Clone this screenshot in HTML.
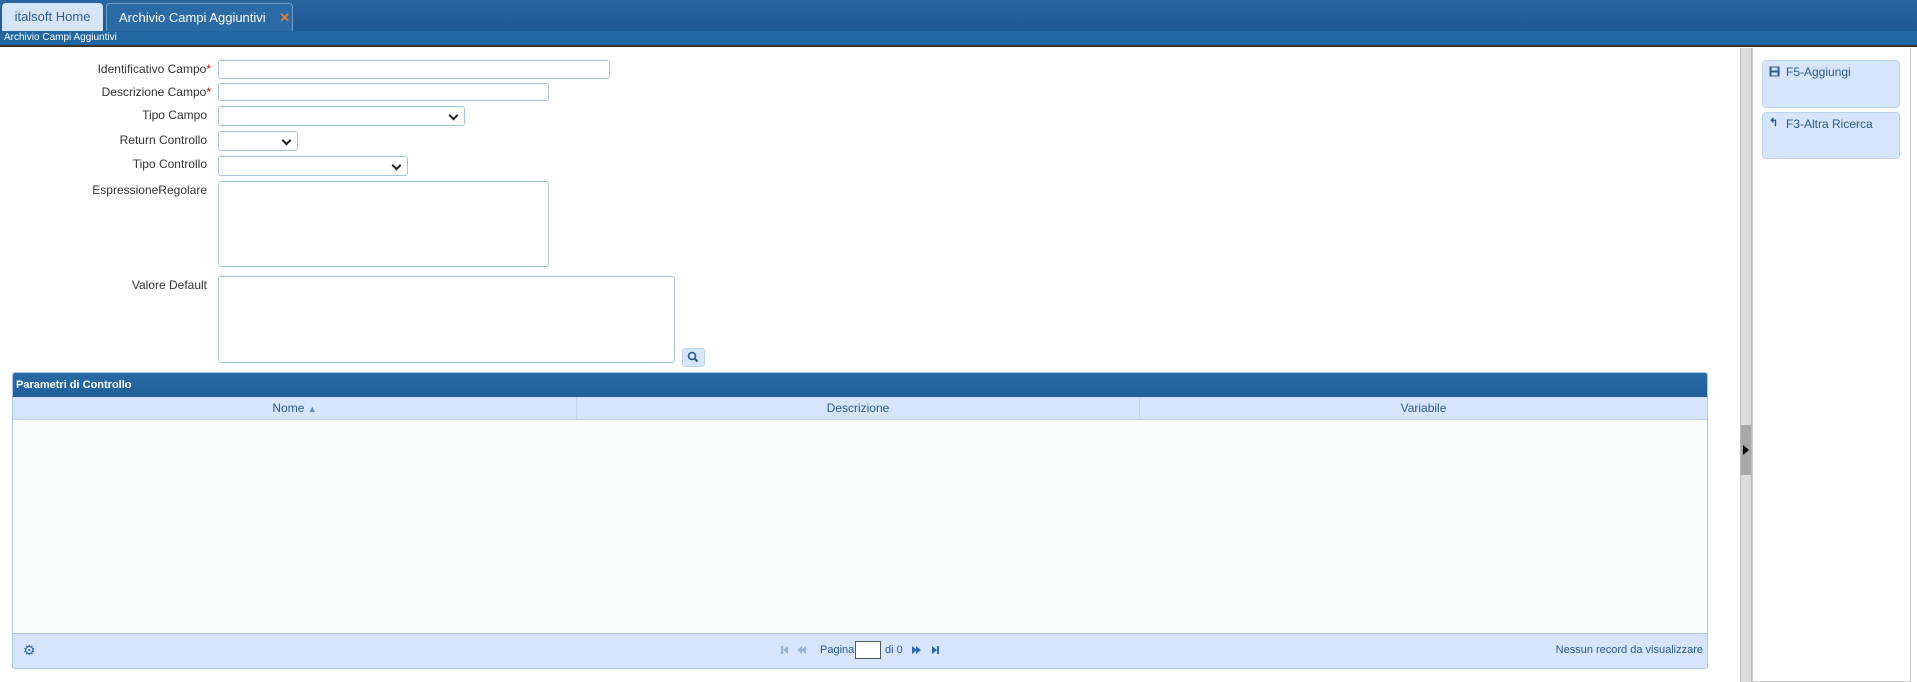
<!DOCTYPE html>
<html><head><meta charset="utf-8">
<style>
*{box-sizing:border-box;margin:0;padding:0}
body{width:1917px;height:682px;overflow:hidden;background:#fff;font-family:"Liberation Sans",sans-serif;font-size:12px;color:#333;position:relative}
.abs{position:absolute}
#top{left:0;top:0;width:1917px;height:31px;background:linear-gradient(#2a66a0,#1d5a94);}
#sub{left:0;top:31px;width:1917px;height:16px;background:#2066a0;border-bottom:2px solid #333;color:#fff;font-size:10px;line-height:14px;padding-left:4px}
.tab{top:3px;height:28px;border-radius:4px 4px 0 0;line-height:27px;font-size:13px}
.lbl{right:1706px;text-align:right;font-size:12px;white-space:nowrap}
.lbl b{color:#d00;font-weight:normal}
.in{left:218px;border:1px solid #a6c4e0;border-radius:3px;background:#fff}
.sel::after{content:"";position:absolute;right:7px;top:5px;width:5px;height:5px;border-right:2px solid #222;border-bottom:2px solid #222;transform:rotate(45deg)}
.btn{left:1762px;width:138px;background:#d6e5fb;border:1px solid #bcd3f0;border-radius:4px;color:#2a5b8a;font-size:12px;padding:4px 0 0 23px}
.pg{position:absolute;top:12px;width:0;height:0;border-top:4px solid transparent;border-bottom:4px solid transparent}
</style></head><body>
<div id="top" class="abs"></div>
<div class="abs tab" style="left:2px;width:101px;background:#d6e4f7;color:#2a5f95;text-align:center">italsoft Home</div>
<div class="abs tab" style="left:106px;width:187px;background:#2a6aa5;border:1px solid #6f9cc8;border-bottom:none;color:#fff;padding-left:12px">Archivio Campi Aggiuntivi <span style="color:#f07d1f;font-weight:bold;margin-left:10px">✕</span></div>
<div id="sub" class="abs">Archivio Campi Aggiuntivi</div>

<div class="abs lbl" style="top:62px">Identificativo Campo<b>*</b></div>
<div class="abs in" style="top:60px;width:392px;height:19px"></div>
<div class="abs lbl" style="top:85px">Descrizione Campo<b>*</b></div>
<div class="abs in" style="top:83px;width:331px;height:18px"></div>
<div class="abs lbl" style="top:108px;right:1710px">Tipo Campo</div>
<div class="abs in sel" style="top:106px;width:247px;height:20px"></div>
<div class="abs lbl" style="top:133px;right:1710px">Return Controllo</div>
<div class="abs in sel" style="top:131px;width:80px;height:20px"></div>
<div class="abs lbl" style="top:157px;right:1710px">Tipo Controllo</div>
<div class="abs in sel" style="top:156px;width:190px;height:20px"></div>
<div class="abs lbl" style="top:183px;right:1710px">EspressioneRegolare</div>
<div class="abs in" style="top:181px;width:331px;height:86px"></div>
<div class="abs lbl" style="top:278px;right:1710px">Valore Default</div>
<div class="abs in" style="top:276px;width:457px;height:87px"></div>
<div class="abs" style="left:682px;top:348px;width:23px;height:19px;background:#d6e5fb;border:1px solid #bcd3f0;border-radius:3px">
 <svg width="21" height="17" viewBox="0 0 21 17"><circle cx="9" cy="7" r="3.5" fill="none" stroke="#2a5b8a" stroke-width="1.6"/><path d="M11.5 9.5 L14.5 12.5" stroke="#2a5b8a" stroke-width="2"/></svg>
</div>

<div class="abs" style="left:12px;top:372px;width:1696px;height:297px;border:1px solid #a6c8e6;border-radius:3px;background:#fbfdfc;overflow:hidden">
 <div style="height:24px;background:linear-gradient(#2a6aa5,#1f5f9a);color:#fff;font-weight:bold;font-size:11px;line-height:24px;padding-left:3px">Parametri di Controllo</div>
 <div style="height:23px;background:#d6e5fb;border-bottom:1px solid #bcd3f0;display:flex;color:#2a5b8a;line-height:22px;text-align:center">
  <div style="width:564px;border-right:1px solid #c4d8f0">Nome <span style="color:#5b8ac0;font-size:9px">▲</span></div>
  <div style="width:563px;border-right:1px solid #c4d8f0">Descrizione</div>
  <div style="flex:1">Variabile</div>
 </div>
 <div class="abs" style="left:0;bottom:0;width:100%;height:35px;background:#d6e5fb;border-top:1px solid #b0cbe6;color:#2a5b8a">
  <span class="abs" style="left:10px;top:8px;font-size:14px;color:#2b6cae">⚙</span>
  <span class="abs" style="left:768px;top:12px;width:2px;height:8px;background:#9ab4d4"></span>
  <span class="pg" style="left:770px;border-right:5px solid #9ab4d4"></span>
  <span class="pg" style="left:784px;border-right:5px solid #9ab4d4"></span>
  <span class="pg" style="left:788px;border-right:5px solid #9ab4d4"></span>
  <span class="abs" style="left:807px;top:10px;font-size:11px">Pagina</span>
  <span class="abs" style="left:842px;top:7px;width:26px;height:18px;background:#fff;border:1px solid #555"></span>
  <span class="abs" style="left:872px;top:10px;font-size:11px">di 0</span>
  <span class="pg" style="left:899px;border-left:5px solid #2b6cae"></span>
  <span class="pg" style="left:903px;border-left:5px solid #2b6cae"></span>
  <span class="pg" style="left:919px;border-left:5px solid #2b6cae"></span>
  <span class="abs" style="left:924px;top:12px;width:2px;height:8px;background:#2b6cae"></span>
  <span class="abs" style="right:4px;top:10px;font-size:11px">Nessun record da visualizzare</span>
 </div>
</div>

<div class="abs" style="left:1740px;top:48px;width:12px;height:634px;background:#dcdcdc;border-left:1px solid #bbb;border-right:1px solid #bbb"></div>
<div class="abs" style="left:1741px;top:425px;width:10px;height:50px;background:#a8a8a8"></div>
<div class="abs" style="left:1743px;top:445px;width:0;height:0;border-left:6px solid #000;border-top:5px solid transparent;border-bottom:5px solid transparent"></div>
<div class="abs" style="left:1752px;top:48px;width:159px;height:634px;border:1px solid #ccc;border-top:none"></div>
<div class="abs btn" style="top:60px;height:48px"><svg class="abs" style="left:6px;top:5px" width="11" height="11" viewBox="0 0 11 11"><rect x="0.5" y="0.5" width="10" height="10" fill="#2a5b8a"/><rect x="2.5" y="1.5" width="6" height="3" fill="#d6e5fb"/><rect x="2.5" y="6.5" width="6" height="3" fill="#d6e5fb"/></svg>F5-Aggiungi</div>
<div class="abs btn" style="top:112px;height:47px"><span class="abs" style="left:6px;top:3px;font-size:11px;font-weight:bold">↰</span>F3-Altra Ricerca</div>
</body></html>
